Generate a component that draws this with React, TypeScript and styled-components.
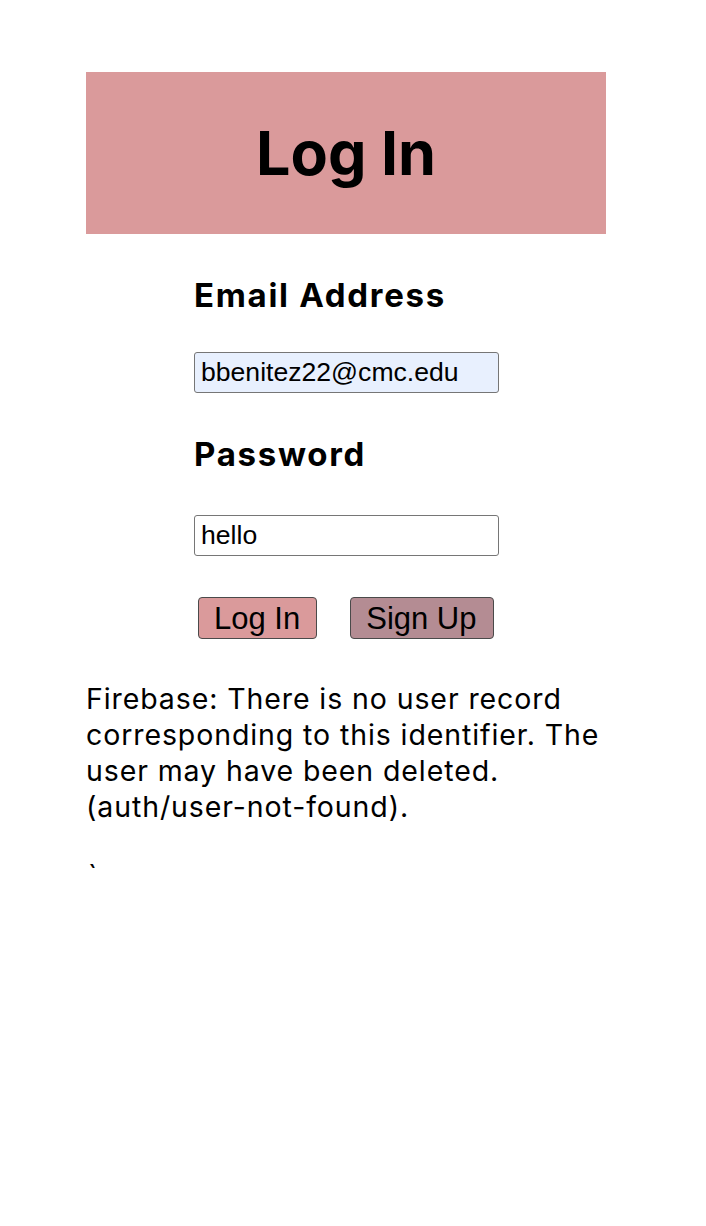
import React from "react";
import styled, { createGlobalStyle } from "styled-components";

const Global = createGlobalStyle`
  html, body { margin: 0; padding: 0; background: #ffffff; }
  body { font-family: Inter, "Noto Sans", sans-serif; color: #000; }
`;

const Page = styled.div`
  padding: 72px 86px 0 86px;
  width: 520px;
`;

const Header = styled.header`
  background: #da9a9b;
  height: 162px;
  display: flex;
  align-items: center;
  justify-content: center;
`;

const Title = styled.h1`
  margin: 0;
  font-family: Inter, sans-serif;
  font-weight: 700;
  font-size: 61px;
  line-height: 1;
`;

const Form = styled.form`
  display: flex;
  flex-direction: column;
  align-items: flex-start;
  padding-left: 108px;
  margin-top: 41px;
`;

const Label = styled.label`
  font-family: Inter, sans-serif;
  font-weight: 700;
  font-size: 33px;
  letter-spacing: 1.7px;
  line-height: 40px;
`;

const Input = styled.input<{ $autofill?: boolean; $top: number; $bottom: number }>`
  box-sizing: border-box;
  width: 305px;
  height: 41px;
  margin: ${(p) => `${p.$top}px 0 ${p.$bottom}px 0`};
  padding: 0 6px;
  border: 1px solid #767676;
  border-radius: 3px;
  background: ${(p) => (p.$autofill ? "#e8f0fe" : "#ffffff")};
  font-family: "Liberation Sans", Arial, sans-serif;
  font-size: 26.6px;
  color: #000;
  outline: none;
`;

const Buttons = styled.div`
  display: flex;
  gap: 33px;
  padding-left: 4px;
`;

const Button = styled.button<{ $bg: string }>`
  box-sizing: border-box;
  height: 42px;
  padding: 0 16px 0 15px;
  border: 1px solid #4a4a4a;
  border-radius: 4px;
  background: ${(p) => p.$bg};
  font-family: "Liberation Sans", Arial, sans-serif;
  font-size: 31px;
  color: #000;
  line-height: 1;
`;

const Message = styled.p`
  margin: 42px 0 0 0;
  font-family: Inter, sans-serif;
  font-size: 28.5px;
  letter-spacing: 0.9px;
  line-height: 36px;
  width: 540px;
`;

const Tick = styled.p`
  margin: 32px 0 0 0;
  font-family: Inter, sans-serif;
  font-size: 28px;
  line-height: 36px;
  padding-left: 2px;
`;

export default function App() {
  return (
    <>
      <Global />
      <Page>
        <Header>
          <Title>Log In</Title>
        </Header>
        <Form onSubmit={(e) => e.preventDefault()}>
          <Label htmlFor="email">Email Address</Label>
          <Input id="email" $autofill $top={37} $bottom={41} defaultValue="bbenitez22@cmc.edu" />
          <Label htmlFor="password">Password</Label>
          <Input id="password" $top={41} $bottom={41} defaultValue="hello" />
          <Buttons>
            <Button type="button" $bg="#da9a9b">Log In</Button>
            <Button type="button" $bg="#b48c93">Sign Up</Button>
          </Buttons>
        </Form>
        <Message>
          Firebase: There is no user record corresponding to this identifier. The user may have been deleted. (auth/user-not-found).
        </Message>
        <Tick>`</Tick>
      </Page>
    </>
  );
}
